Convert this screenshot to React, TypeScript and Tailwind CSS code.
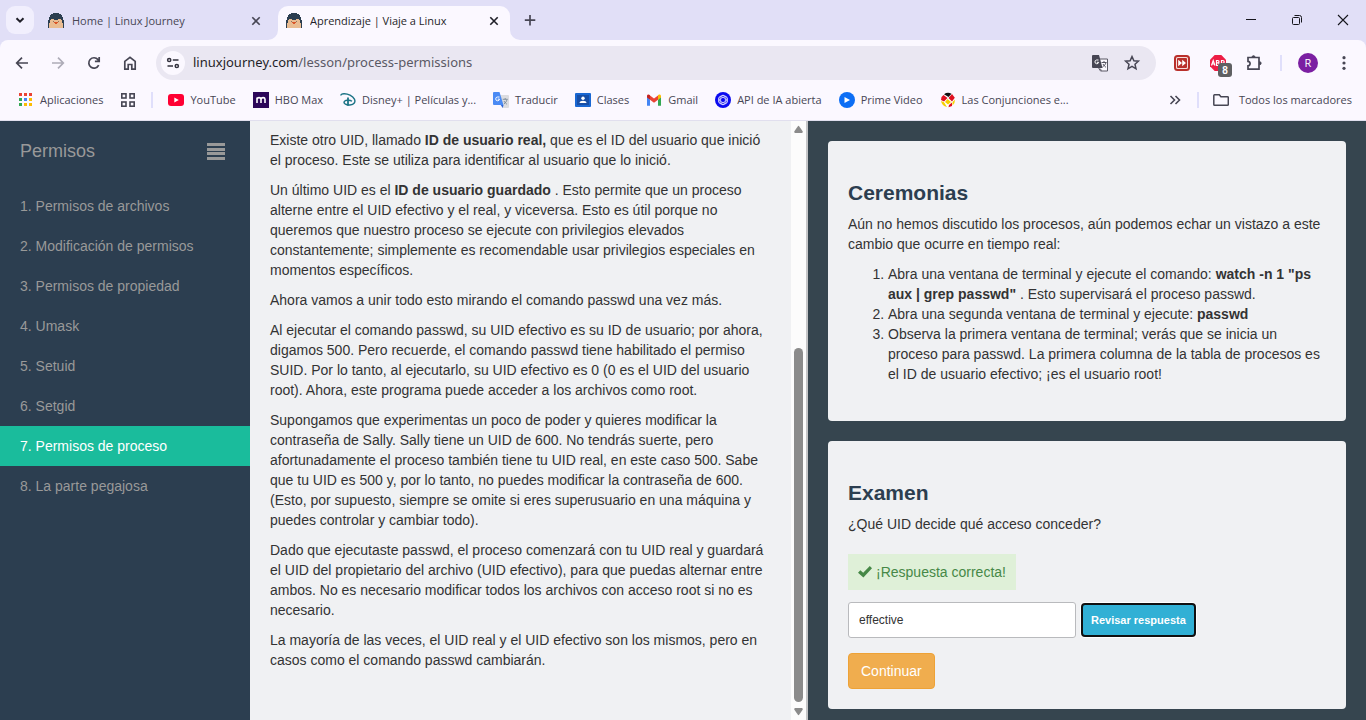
import React from "react";

type BoxProps = { children: React.ReactNode };

function Favicon() {
  return (
    <svg width="16" height="16" viewBox="0 0 16 16" shapeRendering="crispEdges" aria-hidden="true" className="shrink-0">
      <path d="M5 0h6v1h2v1h1v2h1v3h1v8H0V7h1V4h1V2h1V1h2z" fill="#2c3e50" />
      <path d="M3 6h3v1h4V6h3v1h1v3h1v5H1v-5h1V7h1z" fill="#e9bc92" />
      <path d="M5 8h1v1H5zM10 8h1v1h-1z" fill="#8d7462" />
      <path d="M6 9h4v1H9v1H7v-1H6z" fill="#d9572b" />
    </svg>
  );
}

function CloseIcon() {
  return (
    <svg width="16" height="16" viewBox="0 0 16 16" fill="none" stroke="currentColor" strokeWidth="1.6" aria-hidden="true">
      <path d="M4.3 4.3l7.4 7.4M11.7 4.3l-7.4 7.4" />
    </svg>
  );
}

function TabStrip() {
  return (
    <header className="flex h-10 items-start bg-[#e1dff7]">
      <button aria-label="Buscar pestañas" className="mt-1.5 ml-1.5 flex h-7 w-7 shrink-0 items-center justify-center rounded-[9px] bg-[#f1effd] text-[#1f1f28]">
        <svg width="16" height="16" viewBox="0 0 16 16" fill="none" stroke="currentColor" strokeWidth="2" aria-hidden="true">
          <path d="M4.500 6.200L8 9.700l3.500-3.500" />
        </svg>
      </button>
      <div className="mt-1.5 ml-1.5 flex h-[30px] w-[232px] items-center gap-2 px-2 text-[#474654]">
        <Favicon />
        <span className="flex-1 truncate">Home | Linux Journey</span>
        <button aria-label="Cerrar Home"><CloseIcon /></button>
      </div>
      <div className="relative mt-1.5 ml-1.5 h-[34px] w-[232px] rounded-t-[10px] bg-[#fbf8ff] text-[#1f1f28]">
        <svg width="10" height="10" viewBox="0 0 10 10" className="absolute bottom-0 -left-2.5" aria-hidden="true">
          <path d="M10 0v10H0A10 10 0 0 0 10 0z" fill="#fbf8ff" />
        </svg>
        <svg width="10" height="10" viewBox="0 0 10 10" className="absolute -right-2.5 bottom-0" aria-hidden="true">
          <path d="M0 0v10h10A10 10 0 0 1 0 0z" fill="#fbf8ff" />
        </svg>
        <div className="flex h-[30px] items-center gap-2 px-2">
          <Favicon />
          <span className="flex-1 truncate">Aprendizaje | Viaje a Linux</span>
          <button aria-label="Cerrar Aprendizaje"><CloseIcon /></button>
        </div>
      </div>
      <button aria-label="Nueva pestaña" className="mt-1.5 ml-1.5 flex h-7 w-7 items-center justify-center text-[#474654]">
        <svg width="16" height="16" viewBox="0 0 16 16" fill="none" stroke="currentColor" strokeWidth="1.7" aria-hidden="true">
          <path d="M8 3v10.500M2.800 8.200h10.500" />
        </svg>
      </button>
      <div className="ml-auto flex h-10 text-[#15151c]">
        <button aria-label="Minimizar" className="flex w-[46px] items-center justify-center">
          <svg width="12" height="12" viewBox="0 0 12 12" stroke="currentColor" aria-hidden="true"><path d="M1 5.500h10" /></svg>
        </button>
        <button aria-label="Restaurar" className="flex w-[46px] items-center justify-center">
          <svg width="12" height="12" viewBox="0 0 12 12" fill="none" stroke="currentColor" aria-hidden="true">
            <rect x="1.500" y="3.500" width="7" height="7" rx="1" />
            <path d="M3.500 1.500h5a2 2 0 0 1 2 2v5" />
          </svg>
        </button>
        <button aria-label="Cerrar" className="flex w-[46px] items-center justify-center">
          <svg width="12" height="12" viewBox="0 0 12 12" stroke="currentColor" strokeWidth="1.100" aria-hidden="true"><path d="M1 1l10 10M11 1L1 11" /></svg>
        </button>
      </div>
    </header>
  );
}

function ToolButton({ label, dim, children }: BoxProps & { label: string; dim?: boolean }) {
  return (
    <button aria-label={label} className={dim ? "flex h-9 w-9 shrink-0 items-center justify-center text-[#aeacb8]" : "flex h-9 w-9 shrink-0 items-center justify-center text-[#474654]"}>
      {children}
    </button>
  );
}

const line = { width: 18, height: 18, viewBox: "0 0 18 18", fill: "none", stroke: "currentColor", strokeWidth: 1.7, "aria-hidden": true } as const;

function Toolbar() {
  return (
    <div className="bg-[#e1dff7]">
      <div className="flex h-[46px] items-center rounded-t-lg bg-[#fbf8ff] px-1">
        <ToolButton label="Atrás">
          <svg {...line}><path d="M15 9H4M9 3.700L3.700 9 9 14.300" /></svg>
        </ToolButton>
        <ToolButton label="Adelante" dim>
          <svg {...line}><path d="M3 9h11M9 3.700L14.300 9 9 14.300" /></svg>
        </ToolButton>
        <ToolButton label="Recargar">
          <svg {...line}><path d="M13.700 11.200A5.200 5.200 0 1 1 13 5.600L14 6.800M14.200 3v4.300H9.900" /></svg>
        </ToolButton>
        <ToolButton label="Inicio">
          <svg {...line}><path d="M3.800 7.300L9 3.300l5.200 4v7.900h-3.400v-4.700H7.200v4.700H3.800z" /></svg>
        </ToolButton>
        <div className="mx-2 flex h-[34px] min-w-0 flex-1 items-center rounded-full bg-[#eae7f2] pr-4 pl-[5px]">
          <button aria-label="Información del sitio" className="flex h-6 w-6 shrink-0 items-center justify-center rounded-full bg-[#fbf8ff] text-[#33323e]">
            <svg width="14" height="14" viewBox="0 0 14 14" fill="none" stroke="currentColor" strokeWidth="1.500" aria-hidden="true">
              <circle cx="3.200" cy="4" r="1.600" /><path d="M6.800 4H12.500M1.500 10H7" /><circle cx="10.800" cy="10" r="1.600" />
            </svg>
          </button>
          <a href="#url" className="ml-2 flex-1 truncate font-['Noto_Sans','Open_Sans',sans-serif] text-[13px] text-[#5a5965]">
            <span className="text-[#1f1f28]">linuxjourney.com</span>/lesson/process-permissions
          </a>
          <button aria-label="Traducir esta página" className="mr-4 flex h-4 w-4 items-center justify-center">
            <svg width="17" height="17" viewBox="0 0 17 17" className="shrink-0" aria-hidden="true">
              <path d="M6 4h9.500v12H8.500L6 12z" fill="#fbf8ff" stroke="#5a5965" />
              <path d="M1 0h6l3.500 13H1a1 1 0 0 1-1-1V1a1 1 0 0 1 1-1z" fill="#474654" />
              <path d="M6.500 5H4.500a1.900 1.900 0 1 0 2.200 2.300H4.800" stroke="#fff" fill="none" />
              <path d="M9.500 7.500h5M12 6v1.500M14 7.500c-.5 2-2 3.500-3.500 4.500M11 9c.8 1.500 2 2.700 3 3.200M8 13.500l1.500 2" stroke="#474654" fill="none" strokeWidth=".9" />
            </svg>
          </button>
          <button aria-label="Añadir a marcadores" className="flex h-4 w-4 items-center justify-center text-[#474654]">
            <svg width="18" height="18" viewBox="0 0 18 18" fill="none" stroke="currentColor" strokeWidth="1.500" className="shrink-0" aria-hidden="true">
              <path d="M9 2.600l1.900 4.200 4.500.4-3.400 3.100 1 4.500L9 12.400l-4 2.400 1-4.500-3.400-3.100 4.500-.4z" />
            </svg>
          </button>
        </div>
        <ToolButton label="Avance rápido">
          <svg width="16" height="16" viewBox="0 0 16 16" aria-hidden="true">
            <rect x="1" y="1" width="14" height="14" rx="2.500" fill="#f6dcda" stroke="#b9302b" strokeWidth="2" />
            <rect x="3" y="3" width="10" height="10" rx="1" fill="#b9302b" />
            <path d="M4.200 4.800L8 8l-3.800 3.200zM8.200 4.800L12 8l-3.800 3.200z" fill="#fff" />
          </svg>
        </ToolButton>
        <ToolButton label="Bloqueador de anuncios">
          <span className="relative flex">
            <svg width="16" height="16" viewBox="0 0 16 16" aria-hidden="true">
              <path d="M4.700 0h6.600L16 4.700v6.600L11.300 16H4.700L0 11.300V4.700z" fill="#ed1e45" />
              <path d="M1.500 10.500L3.200 5.500l1.700 5M2.200 9h2M6.500 10.500v-5h1.300a1.200 1.200 0 0 1 0 2.400H6.500h1.500a1.300 1.300 0 0 1 0 2.600zM11.500 10.500v-5h1.300a1.400 1.400 0 0 1 0 2.800h-1.300" stroke="#fff" strokeWidth="1.200" fill="none" />
            </svg>
            <span className="absolute top-2 left-2 flex h-[14px] w-[14px] items-center justify-center rounded-[3px] bg-[#5f6062] font-['Liberation_Sans',sans-serif] text-[10px] font-bold text-white">8</span>
          </span>
        </ToolButton>
        <ToolButton label="Extensiones">
          <svg {...line}><path d="M3 3.500h11v11.700H3v-3.400c2.800 0 2.800-4.400 0-4.400z" /><path d="M7 3.200a1.500 1.500 0 0 1 3 0zM14.600 7.700a1.500 1.500 0 0 1 0 3z" fill="currentColor" strokeWidth="1" /></svg>
        </ToolButton>
        <div className="mx-2 h-4 w-0.5 bg-[#e0dffb]" />
        <ToolButton label="Perfil">
          <span className="flex h-5 w-5 items-center justify-center rounded-full bg-[#7b1fa2] text-[11px] text-white">R</span>
        </ToolButton>
        <ToolButton label="Menú">
          <svg width="16" height="16" viewBox="0 0 16 16" fill="currentColor" aria-hidden="true"><circle cx="8" cy="2.700" r="1.600" /><circle cx="8" cy="8" r="1.600" /><circle cx="8" cy="13.300" r="1.600" /></svg>
        </ToolButton>
      </div>
    </div>
  );
}

const s16 = { width: 16, height: 16, viewBox: "0 0 16 16", "aria-hidden": true, className: "shrink-0" } as const;

const bookmarks: { name: string; icon: React.ReactNode }[] = [
  {
    name: "YouTube",
    icon: <svg {...s16}><rect y="2" width="16" height="12" rx="3" fill="#ff0033" /><path d="M6.300 5.500v5L10.800 8z" fill="#fff" /></svg>,
  },
  {
    name: "HBO Max",
    icon: <svg {...s16}><rect width="16" height="16" fill="#2c0759" /><path d="M4 11V5.500M4 7.300c.3-2.200 3.800-2.200 4 0V11M8 7.300c.3-2.200 3.900-2.200 4 0V11" stroke="#fff" strokeWidth="1.600" fill="none" /></svg>,
  },
  {
    name: "Disney+ | Películas y...",
    icon: <svg {...s16} fill="none" stroke="#1c7486"><path d="M.8 3.500C1 1.300 6 1 10 3.200c4.500 2.400 5.800 5.600 4.300 7.800-1.700 2.500-6.800 2.500-9.300.8-2-1.500-.5-3.300 2-3.500 2-.2 4 .2 5 .9" strokeWidth="1.400" /><path d="M8 5.500v8.300" strokeWidth="1.800" /></svg>,
  },
  {
    name: "Traducir",
    icon: <svg {...s16}><path d="M6 3h9a1 1 0 0 1 1 1v11a1 1 0 0 1-1 1H9.500z" fill="#dcdce0" /><path d="M1 0h5.500l4 13H1a1 1 0 0 1-1-1V1a1 1 0 0 1 1-1z" fill="#4a8af4" /><path d="M10.500 13H7.700l2 3z" fill="#3367d6" /><path d="M6.500 5H4.500a1.900 1.900 0 1 0 2 2.100H4.700" stroke="#fff" fill="none" /><path d="M9.700 7.300h5M12.200 6v1.300M14 7.500c-.5 2-1.500 3.300-3 4.500M11 9c.8 1.500 2 2.700 3 3.200" stroke="#7b8a99" fill="none" strokeWidth=".9" /></svg>,
  },
  {
    name: "Clases",
    icon: <svg {...s16}><rect y="1" width="16" height="14" rx="1" fill="#1967d2" /><rect x="2" y="3" width="12" height="10" fill="#174ea6" /><circle cx="8" cy="6.300" r="1.700" fill="#fff" /><path d="M4.500 11c0-3 7-3 7 0z" fill="#fff" /></svg>,
  },
  {
    name: "Gmail",
    icon: <svg {...s16}><path d="M1 4.500v9.300h3V7.500z" fill="#4285f4" /><path d="M12 7.500v6.300h3V4.500z" fill="#34a853" /><path d="M12 3.600v4.200l3-2.300V4c0-1.800-2-2-3-1z" fill="#fbbc04" /><path d="M4 3.500l4 3 4-3v4.300l-4 3-4-3z" fill="#ea4335" /><path d="M1 4v1.500l3 2.300V3.300C3 2 1 2.200 1 4z" fill="#c5221f" /></svg>,
  },
  {
    name: "API de IA abierta",
    icon: <svg {...s16} fill="none" stroke="#fff" strokeWidth=".6"><circle cx="8" cy="8" r="8" fill="#0b0bf0" stroke="none" /><circle cx="8" cy="8" r="4.600" /><ellipse cx="8" cy="8" rx="2.400" ry="4.800" /><ellipse cx="8" cy="8" rx="2.400" ry="4.800" transform="rotate(60 8 8)" /><ellipse cx="8" cy="8" rx="2.400" ry="4.800" transform="rotate(120 8 8)" /></svg>,
  },
  {
    name: "Prime Video",
    icon: <svg {...s16}><circle cx="8" cy="8" r="8" fill="#0c6ef5" /><path d="M5.500 5v6L11 8z" fill="#fff" /></svg>,
  },
  {
    name: "Las Conjunciones e...",
    icon: <svg {...s16}><circle cx="8" cy="8" r="7.200" fill="#fff" /><path d="M4 2.200a7.200 7.200 0 0 1 7.500-.5L8.500 5z" fill="#111" /><path d="M1.500 5l2-2 4 3-3.500 3.500-3-1.500z" fill="#e01020" /><path d="M8.500 6l3.500-4 2.800 3.700L12 9.500z" fill="#e01020" /><path d="M1 9l3 1.300 3 4.600A7.200 7.200 0 0 1 1 9zM7.500 7l3.500 3-3 2.500L5 10zM12.500 10l2.500-2.500a7.200 7.200 0 0 1-2.500 6z" fill="#f6cf00" /><path d="M9 13l3-2.500 0 3.500-3.500 1.200z" fill="#e01020" /></svg>,
  },
];

const appColors = ["#ea4335", "#ea4335", "#ea4335", "#34a853", "#4285f4", "#fbbc04", "#34a853", "#fbbc04", "#fbbc04"];

function BookmarksBar() {
  return (
    <nav aria-label="Marcadores" className="flex h-[35px] items-center gap-[17px] border-b border-[#e1dfee] bg-[#fbf8ff] pr-3.5 pb-1.5 pl-[18px] whitespace-nowrap text-[#474654]">
      <a href="#apps" className="flex items-center gap-1.5">
        <svg {...s16}>
          {appColors.map((c, i) => (
            <rect key={i} x={1 + (i % 3) * 5} y={1 + Math.floor(i / 3) * 5} width="3" height="3" fill={c} />
          ))}
        </svg>
        Aplicaciones
      </a>
      <button aria-label="Grupos de pestañas">
        <svg {...s16} fill="none" stroke="currentColor" strokeWidth="1.600">
          <rect x="1.800" y="1.800" width="4.200" height="4.200" /><rect x="10" y="1.800" width="4.200" height="4.200" /><rect x="1.800" y="10" width="4.200" height="4.200" /><rect x="10" y="10" width="4.200" height="4.200" />
        </svg>
      </button>
      <div className="-mx-0.5 h-4 w-0.5 shrink-0 bg-[#e0dffb]" />
      {bookmarks.map((b) => (
        <a key={b.name} href="#marcador" className="flex items-center gap-1.5">
          {b.icon}
          {b.name}
        </a>
      ))}
      <div className="ml-auto flex items-center gap-3.5">
        <button aria-label="Más marcadores">
          <svg {...s16} fill="none" stroke="currentColor" strokeWidth="1.600"><path d="M3.500 4l4 4-4 4M8.500 4l4 4-4 4" /></svg>
        </button>
        <div className="h-4 w-0.5 bg-[#e0dffb]" />
        <a href="#todos" className="flex items-center gap-2.5">
          <svg width="16" height="16" viewBox="0 0 16 16" fill="none" stroke="currentColor" strokeWidth="1.500" aria-hidden="true">
            <path d="M1.500 2.800h4.800l1.600 1.900h6.600a.8.800 0 0 1 .8.800v7a.8.800 0 0 1-.8.800H1.600a.8.800 0 0 1-.8-.8v-9a.8.800 0 0 1 .7-.7z" />
          </svg>
          Todos los marcadores
        </a>
      </div>
    </nav>
  );
}

const lessons = ["Permisos de archivos", "Modificación de permisos", "Permisos de propiedad", "Umask", "Setuid", "Setgid", "Permisos de proceso", "La parte pegajosa"];

function Sidebar() {
  return (
    <aside className="bg-[#2c3e50] text-[#999999]">
      <div className="flex h-[65px] items-center justify-between pr-6 pb-1 pl-5">
        <h2 className="pb-0.5 text-lg leading-6">Permisos</h2>
        <button aria-label="Menú de lecciones">
          <svg width="20" height="18" viewBox="0 0 20 18" fill="currentColor" aria-hidden="true">
            <path d="M1 0h18v3H1zM1 5h18v3H1zM1 9h18v3H1zM1 14h18v3H1z" />
          </svg>
        </button>
      </div>
      <nav aria-label="Lecciones">
        {lessons.map((name, i) => (
          <a key={name} href="#leccion" className={i === 6 ? "block bg-[#1abc9c] px-5 py-2.5 text-white" : "block px-5 py-2.5"}>
            {i + 1}. {name}
          </a>
        ))}
      </nav>
    </aside>
  );
}

function Lesson() {
  return (
    <main className="flex border-r-2 border-[#c4c5c7] bg-[#f0f1f3]">
      <article className="min-w-0 flex-1 space-y-2.5 px-5 pt-[9px]">
        <p>Existe otro UID, llamado <strong>ID de usuario real,</strong> que es el ID del usuario que inició el proceso. Este se utiliza para identificar al usuario que lo inició.</p>
        <p>Un último UID es el <strong>ID de usuario guardado</strong> . Esto permite que un proceso alterne entre el UID efectivo y el real, y viceversa. Esto es útil porque no queremos que nuestro proceso se ejecute con privilegios elevados constantemente; simplemente es recomendable usar privilegios especiales en momentos específicos.</p>
        <p>Ahora vamos a unir todo esto mirando el comando passwd una vez más.</p>
        <p>Al ejecutar el comando passwd, su UID efectivo es su ID de usuario; por ahora, digamos 500. Pero recuerde, el comando passwd tiene habilitado el permiso SUID. Por lo tanto, al ejecutarlo, su UID efectivo es 0 (0 es el UID del usuario root). Ahora, este programa puede acceder a los archivos como root.</p>
        <p>Supongamos que experimentas un poco de poder y quieres modificar la contraseña de Sally. Sally tiene un UID de 600. No tendrás suerte, pero afortunadamente el proceso también tiene tu UID real, en este caso 500. Sabe que tu UID es 500 y, por lo tanto, no puedes modificar la contraseña de 600. (Esto, por supuesto, siempre se omite si eres superusuario en una máquina y puedes controlar y cambiar todo).</p>
        <p>Dado que ejecutaste passwd, el proceso comenzará con tu UID real y guardará el UID del propietario del archivo (UID efectivo), para que puedas alternar entre ambos. No es necesario modificar todos los archivos con acceso root si no es necesario.</p>
        <p>La mayoría de las veces, el UID real y el UID efectivo son los mismos, pero en casos como el comando passwd cambiarán.</p>
      </article>
      <div aria-hidden="true" className="flex w-[15px] shrink-0 flex-col items-center bg-[#fcfcfc] py-1 text-[#8b8b8b]">
        <svg width="9" height="8" viewBox="0 0 9 8" fill="currentColor"><path d="M3.700 1.400a1 1 0 0 1 1.600 0L8.800 6.500 8.300 8H.7L.2 6.500z" /></svg>
        <div className="grow-[37]" />
        <div className="w-[9px] grow-[61] rounded-full bg-current" />
        <div className="h-1.5" />
        <svg width="9" height="8" viewBox="0 0 9 8" fill="currentColor"><path d="M3.700 6.600a1 1 0 0 0 1.600 0L8.800 1.500 8.300 0H.7L.2 1.500z" /></svg>
      </div>
    </main>
  );
}

function Card({ title, children }: BoxProps & { title: string }) {
  return (
    <section className="rounded bg-[#f0f1f3] p-5">
      <h3 className="mt-5 mb-2.5 text-[21px] leading-[23px] font-bold text-[#2c3e50]">{title}</h3>
      {children}
    </section>
  );
}

function Exercises() {
  return (
    <div className="space-y-5 bg-[#36454f] p-5">
      <Card title="Ceremonias">
        <p>Aún no hemos discutido los procesos, aún podemos echar un vistazo a este cambio que ocurre en tiempo real:</p>
        <ol className="mt-2.5 mb-[17px] list-decimal pl-10">
          <li>Abra una ventana de terminal y ejecute el comando: <strong>watch -n 1 "ps aux | grep passwd"</strong> . Esto supervisará el proceso passwd.</li>
          <li>Abra una segunda ventana de terminal y ejecute: <strong>passwd</strong></li>
          <li>Observa la primera ventana de terminal; verás que se inicia un proceso para passwd. La primera columna de la tabla de procesos es el ID de usuario efectivo; ¡es el usuario root!</li>
        </ol>
      </Card>
      <Card title="Examen">
        <label htmlFor="respuesta" className="block">¿Qué UID decide qué acceso conceder?</label>
        <div className="mt-5 mb-3 flex h-9 w-fit items-center gap-1 bg-[#dff0d8] px-2.5 text-[#468847]">
          <svg width="14" height="12" viewBox="0 0 14 12" fill="currentColor" aria-hidden="true">
            <path d="M0 6.800l2.300-2.500 2.900 2.500L11.800 0 14 2.200 5.400 11.600z" />
          </svg>
          ¡Respuesta correcta!
        </div>
        <form className="flex items-center gap-[5px]" onSubmit={(e) => e.preventDefault()}>
          <input id="respuesta" type="text" defaultValue="effective" className="h-9 w-[228px] rounded-[3px] border border-[#b9babd] bg-white px-2.5 text-xs text-[#333333] outline-none" />
          <button type="submit" className="h-[34px] rounded border-2 border-[#101010] bg-[#31b0d5] px-2 text-[11px] font-bold text-white ring-1 ring-white">Revisar respuesta</button>
        </form>
        <button type="button" className="mt-[15px] block h-9 rounded border border-[#eea236] bg-[#f0ad4e] px-3 text-white">Continuar</button>
      </Card>
    </div>
  );
}

export default function App() {
  return (
    <div className="flex h-screen flex-col overflow-hidden">
      <div className="shrink-0 font-['Open_Sans','Noto_Sans',sans-serif] text-[11px]">
        <TabStrip />
        <Toolbar />
        <BookmarksBar />
      </div>
      <div className="grid min-h-0 flex-1 grid-cols-[250px_minmax(0,1fr)_minmax(0,1fr)] grid-rows-[minmax(0,1fr)] font-['Liberation_Sans',Arial,sans-serif] text-sm leading-5 text-[#333333]">
        <Sidebar />
        <Lesson />
        <Exercises />
      </div>
    </div>
  );
}
